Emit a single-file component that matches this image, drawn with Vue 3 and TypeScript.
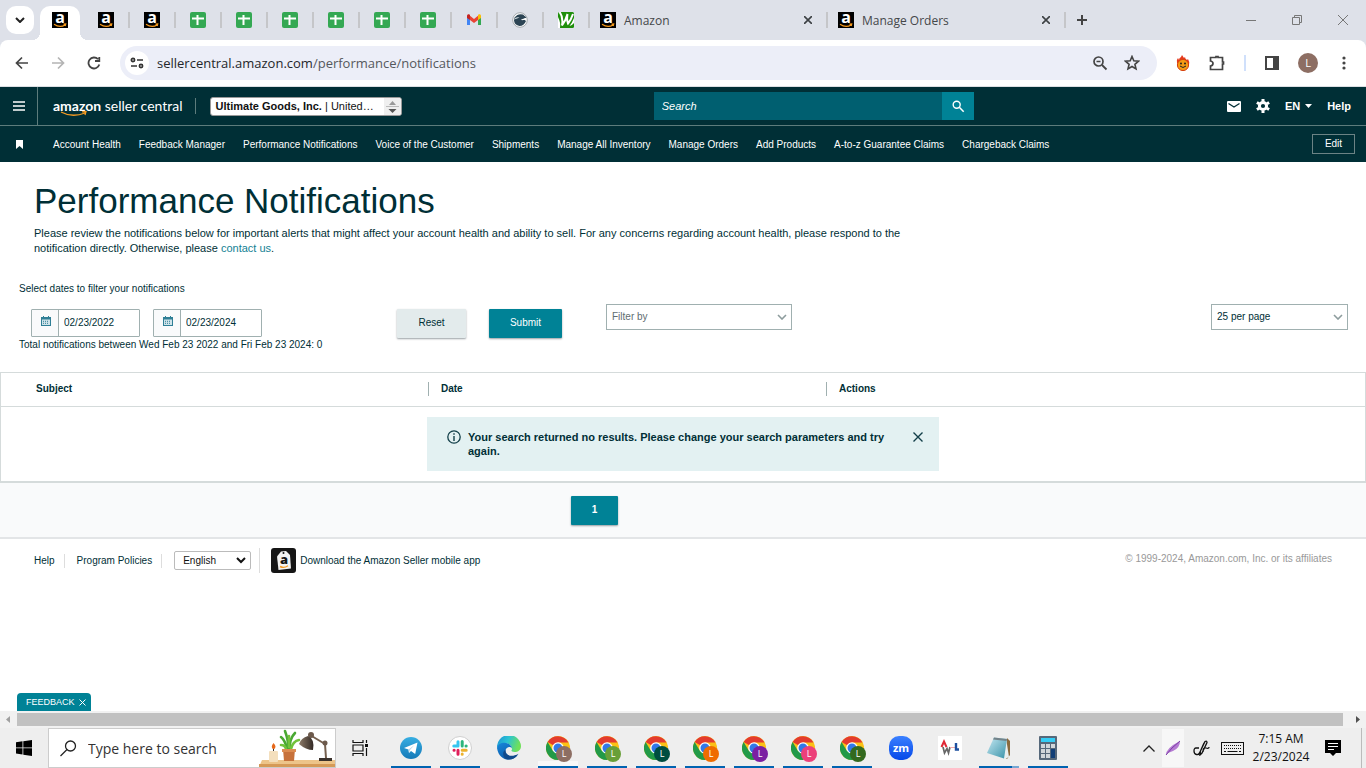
<script setup lang="ts">
import { ref } from 'vue'

interface Tab { icon: string; label: string }
interface TaskApp { name: string; icon: string; badge?: string; state: string }

const compactTabs: Tab[] = [
  { icon: 'amazon', label: 'Amazon' },
  { icon: 'amazon', label: 'Amazon' },
  ...Array.from({ length: 6 }, () => ({ icon: 'sheets', label: 'Google Sheets' })),
  { icon: 'gmail', label: 'Gmail' },
  { icon: 'bird', label: 'Bird' },
  { icon: 'leaf', label: 'Web tool' },
]
const wideTabs: Tab[] = [
  { icon: 'amazon', label: 'Amazon' },
  { icon: 'amazon', label: 'Manage Orders' },
]
const navLinks: string[] = [
  'Account Health', 'Feedback Manager', 'Performance Notifications', 'Voice of the Customer', 'Shipments',
  'Manage All Inventory', 'Manage Orders', 'Add Products', 'A-to-z Guarantee Claims', 'Chargeback Claims',
]
const apps: TaskApp[] = [
  { name: 'Telegram', icon: 'telegram', state: 'open' },
  { name: 'Slack', icon: 'slack', state: 'open' },
  { name: 'Edge', icon: 'edge', state: '' },
  { name: 'Chrome', icon: 'chrome', badge: '#8d6e63', state: 'open active' },
  { name: 'Chrome', icon: 'chrome', badge: '#689f38', state: 'open' },
  { name: 'Chrome', icon: 'chrome', badge: '#004d40', state: 'open' },
  { name: 'Chrome', icon: 'chrome', badge: '#ef6c00', state: 'open' },
  { name: 'Chrome', icon: 'chrome', badge: '#7b1fa2', state: 'open' },
  { name: 'Chrome', icon: 'chrome', badge: '#ec407a', state: 'open' },
  { name: 'Chrome', icon: 'chrome', badge: '#33691e', state: 'open' },
  { name: 'Zoom', icon: 'zoom', state: '' },
  { name: 'Monitor', icon: 'pulse', state: '' },
  { name: 'Notepad', icon: 'notepad', state: 'open stacked' },
  { name: 'Calculator', icon: 'calc', state: 'open' },
]

const startDate = ref('02/23/2022')
const endDate = ref('02/23/2024')
const searchText = ref('')
const alertOpen = ref(true)
</script>

<template>
  <div class="screen">
    <svg class="defs" width="0" height="0" aria-hidden="true">
      <defs>
        <linearGradient id="tg" x1="0" y1="0" x2="0" y2="1"><stop offset="0" stop-color="#37aee2" /><stop offset="1" stop-color="#1579b8" /></linearGradient>
        <linearGradient id="edgeTop" x1="0" y1="0" x2="1" y2="0.3"><stop offset="0" stop-color="#1b8fd6" /><stop offset="0.5" stop-color="#2bc3d2" /><stop offset="1" stop-color="#6fe05a" /></linearGradient>
        <linearGradient id="edgeBody" x1="0" y1="0" x2="0.6" y2="1"><stop offset="0" stop-color="#1788dc" /><stop offset="1" stop-color="#0c57a5" /></linearGradient>
        <linearGradient id="zm" x1="0" y1="0" x2="0" y2="1"><stop offset="0" stop-color="#3a80ff" /><stop offset="1" stop-color="#0548e8" /></linearGradient>
        <linearGradient id="note" x1="0" y1="0" x2="1" y2="1"><stop offset="0" stop-color="#c6e9f3" /><stop offset="1" stop-color="#3992a8" /></linearGradient>
        <linearGradient id="shade" x1="0" y1="0" x2="1" y2="0"><stop offset="0" stop-color="#8d7a68" /><stop offset="1" stop-color="#332a25" /></linearGradient>
        <symbol id="i-amazon" viewBox="0 0 16 16">
          <rect width="16" height="16" fill="#000" />
          <text x="8" y="11" text-anchor="middle" font-family="Open Sans, sans-serif" font-size="16" font-weight="700" fill="#fff">a</text>
          <path d="M2 12.300q6 4 11 .6M11.500 12.200l2.200-.2-.5 2" fill="none" stroke="#f79a1c" stroke-width="1.200" />
        </symbol>
        <symbol id="i-sheets" viewBox="0 0 16 16">
          <rect width="16" height="16" rx="2" fill="#34a853" />
          <path d="M2 6.500h12M7.500 3v10" stroke="#fff" stroke-width="2" />
        </symbol>
        <symbol id="i-gmail" viewBox="0 0 16 16">
          <path d="M1 4.500V13h3V7.500z" fill="#4285f4" />
          <path d="M15 4.500V13h-3V7.500z" fill="#34a853" />
          <path d="M4 8V3.800L8 7l4-3.200V8l-4 3z" fill="#ea4335" />
          <path d="M1 5V4c0-1.700 1.800-2.200 3-1.200V8L1 6z" fill="#c5221f" />
          <path d="M15 5V4c0-1.700-1.800-2.200-3-1.200V8l3-2z" fill="#fbbc04" />
        </symbol>
        <symbol id="i-bird" viewBox="0 0 16 16">
          <circle cx="8" cy="8" r="7.300" fill="#fff" stroke="#a3a9ad" />
          <path d="M2.500 5.500Q6 1 11 2.500l3.500 3-3 1.500 2.500 2Q12 14 7.500 14 2.500 13 2 8.500z" fill="#2c4454" />
          <path d="M2 7.500Q4 4.500 7.500 5.500L5 6.500z" fill="#dce4e8" />
          <path d="m9 7.500 5-1.500v1.500l-4 .8z" fill="#fff" />
        </symbol>
        <symbol id="i-leaf" viewBox="0 0 16 16">
          <rect width="16" height="16" rx="1.500" fill="#1f8f0b" />
          <path d="M1.500 0Q5.500 5 4 13.500 7.500 9 9.500 2q-1 6 .5 9.500Q13 8 15 2" fill="none" stroke="#fff" stroke-width="2" />
          <path d="M0 5q3 6 2 11H0zM16 6q-2 5-4.500 8 2 0 4.500-3z" fill="#fff" />
        </symbol>
        <symbol id="i-chrome" viewBox="0 0 24 24">
          <circle cx="12" cy="12" r="12" fill="#fbc116" />
          <path d="M12 12 1.600 6A12 12 0 0 1 22.400 6.500H12z" fill="#e33b2e" />
          <path d="M1.600 6A12 12 0 0 0 12 24l5-9-5-3-5 3z" fill="#229a48" />
          <circle cx="12" cy="12" r="5.800" fill="#fff" />
          <circle cx="12" cy="12" r="4.500" fill="#3278e8" />
        </symbol>
        <symbol id="i-telegram" viewBox="0 0 24 24">
          <circle cx="12" cy="12" r="11" fill="url(#tg)" />
          <path d="M5 12 18.500 6.500 16.200 18l-4.200-3-2 2-.5-3.600z" fill="#fff" />
          <path d="M9.500 13.400 15.500 9l-4.500 5-1 3z" fill="#bcd9ea" />
        </symbol>
        <symbol id="i-slack" viewBox="0 0 24 24">
          <circle cx="12" cy="12" r="11.500" fill="#fff" stroke="#cfcfcf" />
          <g fill="none" stroke-width="3" stroke-linecap="round">
            <path d="M10 5.800v4M5.800 10H10" stroke="#36c5f0" />
            <path d="M14.200 5.500V10M18 10h.2" stroke="#2eb67d" />
            <path d="M14.200 14.200h4M14.200 18v.2" stroke="#ecb22e" />
            <path d="M10 14.200v4M6 14.200h.2" stroke="#e01e5a" />
          </g>
        </symbol>
        <symbol id="i-edge" viewBox="0 0 24 24">
          <path d="M0 12A12 12 0 0 1 24 10c0 4-3 6-6.500 6-3 0-3.800-1.200-2.500-2.600C15 9 11 6.500 7 7.500 3 8 1 10 0 12z" fill="url(#edgeTop)" />
          <path d="M0 12c1-5 7-6.500 11-4.500 2 1 3.500 2.500 4 4.500-2-2-6-1-6.500 2.500C8 19 13 22 20.500 19 16 26 2 26 0 12z" fill="url(#edgeBody)" />
          <path d="M8.500 14C8 19 14 22 21.500 17.800 18 24 10 25.500 7 21 5.500 18 6 15 8.500 14z" fill="#114a8b" />
        </symbol>
        <symbol id="i-zoom" viewBox="0 0 24 24">
          <rect width="24" height="24" rx="10" fill="url(#zm)" />
          <text x="12" y="16" text-anchor="middle" font-family="Open Sans, sans-serif" font-size="11" font-weight="700" fill="#fff">zm</text>
        </symbol>
        <symbol id="i-pulse" viewBox="0 0 24 24">
          <rect width="24" height="24" fill="#fff" />
          <path d="M3.500 11 6 5.500 8.500 11" fill="none" stroke="#e02836" stroke-width="2" />
          <path d="M5 11l1.500 6L9 12.500l1.500 4.500 1.500-6" fill="none" stroke="#666" stroke-width="1.700" />
          <path d="M12 11.500h5" stroke="#f1a9a9" />
          <path d="M18 7v6.500h3" fill="none" stroke="#1d4f9f" stroke-width="2.400" />
        </symbol>
        <symbol id="i-notepad" viewBox="0 0 24 24">
          <path d="m20 2 3 3v14l-3 4-3-2z" fill="#8a6a3d" />
          <path d="m19 2 3 19-4 2-6-1z" fill="#e9eff0" />
          <path d="M7 1.500 20 3l-3 19.500L0 17z" fill="url(#note)" />
          <path d="M7 1.500 20 3l-.5 2-13.500-1.500z" fill="#73838a" />
        </symbol>
        <symbol id="i-calc" viewBox="0 0 24 24">
          <rect x="3" width="18" height="24" rx="1" fill="#56687a" />
          <rect x="5" y="2" width="14" height="4" fill="#35cdf5" />
          <path d="M5 8h4v4H5zM10 8h4v4h-4zM15 8h4v4h-4zM5 13h4v4H5zM10 13h4v4h-4zM5 18h4v4H5zM10 18h4v4h-4z" fill="#d0d6da" />
          <path d="M15 13h4v9h-4z" fill="#123f77" />
        </symbol>
        <symbol id="i-calendar" viewBox="0 0 10 10">
          <path d="M2 0h1v1h4V0h1v1h2v9H0V1h2z" fill="#2f7f96" />
          <path d="M1 3.500h8V9H1z" fill="#cfe3e9" />
          <path d="M2 5.300h6M2 7.300h6" stroke="#2f7f96" stroke-dasharray="1 1" />
        </symbol>
        <symbol id="i-search" viewBox="0 0 16 16">
          <circle cx="6.500" cy="6.500" r="4" fill="none" stroke="currentColor" stroke-width="1.600" />
          <path d="m9.500 9.500 5 5" stroke="currentColor" stroke-width="1.800" />
        </symbol>
      </defs>
    </svg>

    <header class="browser">
      <div class="tabstrip">
        <button class="tab-search" aria-label="Search tabs"><svg width="10" height="6"><path d="m1 1 4 4 4-4" fill="none" stroke="#222" stroke-width="2" /></svg></button>
        <div class="tab-active"><svg class="fav" role="img" aria-label="Performance Notifications"><use href="#i-amazon" /></svg></div>
        <div v-for="(tab, i) in compactTabs" :key="i" class="tab" :class="{ first: i === 0 }">
          <svg class="fav" role="img" :aria-label="tab.label"><use :href="'#i-' + tab.icon" /></svg>
        </div>
        <div v-for="tab in wideTabs" :key="tab.label" class="tab wide">
          <svg class="fav" aria-hidden="true"><use :href="'#i-' + tab.icon" /></svg>
          <span>{{ tab.label }}</span>
          <button :aria-label="'Close ' + tab.label"><svg width="8" height="8"><path d="m0 0 8 8M8 0 0 8" stroke="#3c4043" stroke-width="1.600" /></svg></button>
        </div>
        <button class="new-tab" aria-label="New tab"><svg width="10" height="10"><path d="M5 0v10M0 5h10" stroke="#444" stroke-width="2" /></svg></button>
        <div class="window-controls">
          <button aria-label="Minimize"><svg width="10" height="10"><path d="M0 5.500h10" stroke="#777" /></svg></button>
          <button aria-label="Restore"><svg width="10" height="10" fill="none" stroke="#777"><path d="M.5 2.500h7v7h-7zM2.500 2.500v-2h7v7h-2" /></svg></button>
          <button aria-label="Close window"><svg width="10" height="10"><path d="m0 0 10 10M10 0 0 10" stroke="#777" /></svg></button>
        </div>
      </div>
      <div class="toolbar">
        <button class="tool" aria-label="Back"><svg width="14" height="14" fill="none" stroke="#444" stroke-width="1.700"><path d="M13 7H2M7 1.500 1.500 7 7 12.500" /></svg></button>
        <button class="tool" aria-label="Forward"><svg width="14" height="14" fill="none" stroke="#b4b4b4" stroke-width="1.700"><path d="M1 7h11M7 1.500 12.500 7 7 12.500" /></svg></button>
        <button class="tool" aria-label="Reload"><svg width="14" height="14" fill="none" stroke="#444" stroke-width="1.800"><path d="M12.300 8.500A5.500 5.500 0 1 1 11 3.200M12.300 1V5H8" /></svg></button>
        <div class="omnibox">
          <button class="site-info" aria-label="Site information"><svg width="14" height="12" fill="none" stroke="#333" stroke-width="1.700"><circle cx="3" cy="3" r="1.600" /><path d="M7 3h6M1 9h6" /><circle cx="11" cy="9" r="1.600" /></svg></button>
          <span class="url">sellercentral.amazon.com<span>/performance/notifications</span></span>
          <button aria-label="Zoom"><svg width="16" height="16" fill="none" stroke="#444"><circle cx="6.500" cy="6.500" r="4.500" stroke-width="1.700" /><path d="m10 10 4.500 4.500" stroke-width="1.800" /><path d="M4.500 6.500h4" stroke-width="1.500" /></svg></button>
          <button aria-label="Bookmark"><svg width="16" height="16" viewBox="0 0 16 16"><path d="m8 1.500 1.800 4.300 4.700.4-3.600 3.100 1.100 4.600L8 11.500l-4 2.400 1.100-4.600L1.500 6.200l4.700-.4z" fill="none" stroke="#444" stroke-width="1.600" /></svg></button>
        </div>
        <div class="extensions">
          <button aria-label="Flame extension"><svg width="14" height="16"><path d="M1 8Q0 5 2 3l1 2q0-2 2-3l1-2 2 3 1-1q0 2 2 3l1-1q2 3 1 6z" fill="#e5391b" /><circle cx="7" cy="10" r="5.600" fill="#f49a13" stroke="#d6410e" /><circle cx="5" cy="8.500" r="1" fill="#222" /><circle cx="9" cy="8.500" r="1" fill="#222" /><path d="M4 11q3 3 6 0" fill="none" stroke="#222" /></svg></button>
          <button aria-label="Extensions"><svg width="18" height="18" viewBox="0 0 18 18"><path d="M2.500 3.500H8v-1h2v1h4.500V8h1v2h-1v5.500h-12V12Q5 11.500 5 9.500T2.500 7z" fill="none" stroke="#444" stroke-width="1.700" /></svg></button>
          <i class="split"></i>
          <button aria-label="Side panel"><svg width="16" height="14"><path d="M2 1h12v12H2z" fill="none" stroke="#444" stroke-width="2" /><path d="M9 1h5v12H9z" fill="#444" /></svg></button>
          <button class="profile" aria-label="Profile">L</button>
          <button class="more" aria-label="Menu"><svg width="4" height="14" fill="#444"><circle cx="2" cy="2" r="1.600" /><circle cx="2" cy="7" r="1.600" /><circle cx="2" cy="12" r="1.600" /></svg></button>
        </div>
      </div>
    </header>

    <div class="topbar">
      <div class="brand-side">
        <button class="hamburger" aria-label="Open menu"><svg width="12" height="10"><path d="M0 1h12M0 5h12M0 9h12" stroke="#fff" stroke-width="1.400" /></svg></button>
        <a href="#" class="logo"><b>amazon</b> seller central
          <svg width="28" height="6" aria-hidden="true"><path d="M1 1q11 6 24 1M22 .8l4-.3-1 3.500" fill="none" stroke="#f59b23" stroke-width="1.300" /></svg>
        </a>
        <button class="store"><span><b>Ultimate Goods, Inc.</b> | United…</span><svg width="17" height="17"><path d="M0 0h17v17H0z" fill="#efefef" /><path d="m8.500 3 3.500 4H5z" fill="#999" /><path d="M2 8.500h13" stroke="#bbb" /><path d="m8.500 15 4-4h-8z" fill="#555" /></svg></button>
      </div>
      <form class="search" @submit.prevent>
        <input v-model="searchText" type="text" aria-label="Search" placeholder="Search" />
        <button aria-label="Submit search"><svg width="14" height="14"><use href="#i-search" /></svg></button>
      </form>
      <div class="account-side">
        <button aria-label="Messages"><svg width="14" height="11"><rect width="14" height="11" rx="1" fill="#fff" /><path d="m1.500 2.500 5.500 3.500 5.500-3.500" fill="none" stroke="#002f36" stroke-width="1.300" /></svg></button>
        <button aria-label="Settings"><svg width="14" height="14" viewBox="0 0 14 14"><circle cx="7" cy="7" r="3.600" fill="none" stroke="#fff" stroke-width="3" /><path d="M7 0v2.500M7 11.500V14M.9 3.500l2.200 1.300M10.900 9.200l2.200 1.300M.9 10.500l2.200-1.300M10.900 4.800l2.200-1.300" stroke="#fff" stroke-width="3" /></svg></button>
        <button class="lang">EN <svg width="7" height="4"><path d="M0 0h7L3.500 4z" fill="#fff" /></svg></button>
        <a href="#">Help</a>
      </div>
    </div>

    <nav class="favorites">
      <button class="bookmark" aria-label="Favorites"><svg width="7" height="9"><path d="M0 0h7v9L3.500 6 0 9z" fill="#fff" /></svg></button>
      <div class="links"><a v-for="link in navLinks" :key="link" href="#">{{ link }}</a></div>
      <button class="edit">Edit</button>
    </nav>

    <main class="content">
      <section class="intro">
        <h1>Performance Notifications</h1>
        <p>Please review the notifications below for important alerts that might affect your account health and ability to sell. For any concerns regarding account health, please respond to the notification directly. Otherwise, please <a href="#">contact us</a>.</p>
      </section>

      <section class="filters">
        <p class="hint">Select dates to filter your notifications</p>
        <div class="filter-row">
          <div class="dates">
            <label class="date"><span><svg width="10" height="10"><use href="#i-calendar" /></svg></span><input v-model="startDate" type="text" aria-label="Start date" /></label>
            <label class="date"><span><svg width="10" height="10"><use href="#i-calendar" /></svg></span><input v-model="endDate" type="text" aria-label="End date" /></label>
          </div>
          <button class="btn reset">Reset</button>
          <button class="btn primary submit">Submit</button>
          <div class="picker filter-by">
            <select aria-label="Filter by"><option>Filter by</option></select>
            <svg width="10" height="6" aria-hidden="true"><path d="m1 1 4 4 4-4" fill="none" stroke="#8d9c9d" stroke-width="1.600" /></svg>
          </div>
          <div class="picker per-page">
            <select aria-label="Results per page"><option>25 per page</option></select>
            <svg width="10" height="6" aria-hidden="true"><path d="m1 1 4 4 4-4" fill="none" stroke="#8d9c9d" stroke-width="1.600" /></svg>
          </div>
        </div>
        <p class="total">Total notifications between Wed Feb 23 2022 and Fri Feb 23 2024: 0</p>
      </section>

      <table class="results">
        <thead>
          <tr><th scope="col">Subject</th><th scope="col"><span>Date</span></th><th scope="col"><span>Actions</span></th></tr>
        </thead>
        <tbody>
          <tr>
            <td colspan="3">
              <div v-if="alertOpen" class="alert" role="status">
                <svg width="14" height="14" aria-hidden="true"><circle cx="7" cy="7" r="6.200" fill="none" stroke="#123f49" stroke-width="1.300" /><path d="M7 6v5M7 3.300v1.500" stroke="#123f49" stroke-width="1.400" /></svg>
                <span>Your search returned no results. Please change your search parameters and try again.</span>
                <button aria-label="Dismiss" @click="alertOpen = false"><svg width="10" height="10"><path d="m.5.5 9 9M9.500.5l-9 9" stroke="#123f49" stroke-width="1.400" /></svg></button>
              </div>
            </td>
          </tr>
        </tbody>
      </table>

      <div class="pager"><button class="btn primary page">1</button></div>

      <footer class="footer">
        <a href="#">Help</a>
        <a href="#">Program Policies</a>
        <div class="lang-pick"><select aria-label="Language"><option>English</option></select><svg width="10" height="7" aria-hidden="true"><path d="m1 1 4 4 4-4" fill="none" stroke="#111" stroke-width="2" /></svg></div>
        <a href="#" class="app">
          <svg width="25" height="25" viewBox="0 0 25 25"><rect width="25" height="25" rx="3" fill="#151515" /><path d="M6 8.500 10 3.500l5-.5 4 4 1 13.500-12.500 1.500z" fill="#f2f2f2" /><circle cx="12.500" cy="5" r="1" fill="#151515" /><text x="13" y="16" text-anchor="middle" font-family="Open Sans, sans-serif" font-weight="800" font-size="13" fill="#151515">a</text><path d="M9 18.500q4 2 8-.8" fill="none" stroke="#f59b23" stroke-width="1.400" /></svg>
          Download the Amazon Seller mobile app
        </a>
        <small>© 1999-2024, Amazon.com, Inc. or its affiliates</small>
      </footer>

      <div class="feedback"><button>FEEDBACK</button><button aria-label="Close feedback"><svg width="7" height="7"><path d="m.5.5 6 6M6.500.5l-6 6" stroke="#fff" /></svg></button></div>
    </main>

    <div class="scrollbar" aria-hidden="true">
      <svg width="17" height="17"><path d="M6 8.500 10 5v7z" fill="#a0a0a0" /></svg>
      <i></i>
      <svg width="23" height="17"><path d="M17 8.500 13 5v7z" fill="#505050" /></svg>
    </div>

    <footer class="taskbar">
      <button class="start" aria-label="Start"><svg width="16" height="16" fill="#000"><path d="M0 2.200 6.500 1.300v6.200H0zM7.300 1.200 16 0v7.500H7.300zM0 8.300h6.500v6.200L0 13.600zM7.300 8.300H16V16l-8.700-1.200z" /></svg></button>
      <label class="win-search">
        <svg width="17" height="17" fill="none" stroke="#222" stroke-width="1.300" aria-hidden="true"><circle cx="10.500" cy="6" r="5" /><path d="m7 9.500-6.500 6.500" /></svg>
        <input type="text" aria-label="Windows search" placeholder="Type here to search" />
        <svg class="scene" width="76" height="38" viewBox="0 0 76 38" aria-hidden="true">
          <path d="M3 31h73v7H0z" fill="#edc489" /><path d="M0 35h76v3H0z" fill="#d59a57" />
          <rect x="10" y="22" width="9" height="11" rx="1" fill="#f4dfbd" /><path d="M14.500 14q4 4 0 6.500-3.500-2.500 0-6.500z" fill="#e6691c" /><path d="M14.500 20v2" stroke="#333" />
          <g fill="none" stroke-width="2.600" stroke-linecap="round"><path d="M30 21Q29 10 26 2M31 20Q30 10 36 4M28 20Q26 11 22 8" stroke="#49a832" /><path d="M32 20Q34 12 40 11M27 20Q26 16 22 16M30 18V7" stroke="#72c23b" /></g>
          <path d="M24 20h12l-1 12H25z" fill="#c7713b" /><path d="M23 20h14v3H23z" fill="#dc8b50" />
          <path d="M51 6 66 15l1 14" fill="none" stroke="#75604f" stroke-width="2" /><circle cx="52" cy="6" r="3" fill="#6c594b" /><circle cx="66" cy="14" r="2.500" fill="#6c594b" />
          <path d="M49 7q7 3 5 14-7 0-14-6 2-6 9-8z" fill="url(#shade)" /><path d="M60 29h13v3H60z" fill="#3b322c" />
        </svg>
      </label>
      <button class="task-view" aria-label="Task view"><svg width="17" height="16" fill="none" stroke="#111" stroke-width="1.200"><path d="M1 0v2.500h10V0M1 16v-2.500h10V16M1 5h10v6H1zM14.500 0v3M14.500 8v8" /><path d="M13 5.500h3" stroke-width="3" /></svg></button>
      <div class="apps">
        <button v-for="(app, i) in apps" :key="i" class="app-icon" :class="app.state" :aria-label="app.name">
          <svg width="24" height="24"><use :href="'#i-' + app.icon" /></svg>
          <span v-if="app.badge" class="badge" :style="{ background: app.badge }">L</span>
        </button>
      </div>
      <div class="tray">
        <button class="chev" aria-label="Show hidden icons"><svg width="12" height="7"><path d="m.5 6.500 5.500-5.500 5.500 5.500" fill="none" stroke="#222" stroke-width="1.300" /></svg></button>
        <button class="feather" aria-label="Feather"><svg width="16" height="16"><path d="M1 15Q1 8 15 1q0 7-7 10l-5 2z" fill="#b47ad2" /><path d="M1 15Q6 8 15 1" fill="none" stroke="#7d3fa6" /></svg></button>
        <button class="pen" aria-label="Ink workspace"><svg width="17" height="16" fill="none" stroke="#111" stroke-width="1.300"><path d="M6 8H3q-2 0-2 3t2.500 3.500Q6 15 7 12L12 1.500q2-1 2 1L9 13l-2 2 .5-4L11 3M10 12q0-5 3-4t3-1" /></svg></button>
        <button class="keys" aria-label="Touch keyboard"><svg width="23" height="13" fill="none" stroke="#111"><rect x=".5" y=".5" width="22" height="12" /><path d="M3 3.500h17M3 6.500h17" stroke-dasharray="1 1" /><path d="M3 9.500h2M6.500 9.500h10M18 9.500h2" /></svg></button>
        <button class="clock"><span>7:15 AM</span><span>2/23/2024</span></button>
        <button class="notes" aria-label="Notifications"><svg width="16" height="16"><path d="M0 0h16v13h-5l-3 3-3-3H0z" /><path d="M3 3.500h10M3 6.500h10M3 9.500h6" stroke="#fff" /></svg></button>
      </div>
    </footer>
  </div>
</template>

<style>
html, body { margin: 0; }
</style>

<style scoped>
* { box-sizing: border-box; }
.screen { min-height: 100vh; display: flex; flex-direction: column; background: #fff; color: #002f36; font: 10px/14px "Liberation Sans", Arial, sans-serif; }
.defs { position: absolute; }
button { font: inherit; color: inherit; background: none; border: 0; padding: 0; display: flex; align-items: center; justify-content: center; cursor: pointer; }
input, select { font: inherit; color: inherit; border: 0; outline: 0; min-width: 0; margin: 0; }
select { appearance: none; }
a { color: inherit; text-decoration: none; }
svg { flex: none; display: block; }
h1, p { margin: 0; }

.browser { background: #dee1e9; font-family: "Open Sans", "Noto Sans", sans-serif; color: #45474a; }
.tabstrip { height: 40px; display: flex; align-items: center; padding-left: 6px; }
.tab-search { width: 28px; height: 28px; border-radius: 10px; background: #fff; margin-right: 6px; }
.tab-active { width: 40px; height: 34px; align-self: flex-end; background: #fff; border-radius: 10px 10px 0 0; padding: 6px 12px; position: relative; }
.tab-active::before, .tab-active::after { content: ""; position: absolute; bottom: 0; width: 8px; height: 8px; }
.tab-active::before { right: 100%; background: radial-gradient(circle at 0 0, transparent 8px, #fff 8px); }
.tab-active::after { left: 100%; background: radial-gradient(circle at 100% 0, transparent 8px, #fff 8px); }
.fav { width: 16px; height: 16px; }
.tab { width: 46px; height: 16px; padding-left: 14px; border-right: 2px solid #c5c6c9; display: flex; align-items: center; }
.tab.first { margin-left: 4px; }
.tab.wide { width: 238px; padding: 0 14px 0 10px; gap: 8px; font-size: 12px; line-height: 16px; }
.tab.wide span { padding-top: 1px; }
.tab.wide button { margin-left: auto; }
.new-tab { margin-left: 11px; }
.window-controls { margin-left: auto; display: flex; }
.window-controls button { width: 46px; height: 32px; }
.toolbar { height: 47px; background: #fff; border-bottom: 1px solid #dcdfe3; border-radius: 8px 8px 0 0; display: flex; align-items: center; padding: 0 20px 0 4px; }
.tool { width: 36px; height: 36px; }
.omnibox { flex: 1; height: 34px; margin-left: 8px; border-radius: 17px; background: #eceef8; display: flex; align-items: center; gap: 16px; padding: 0 17px 0 5px; }
.site-info { width: 24px; height: 24px; border-radius: 12px; background: #fff; }
.url { flex: 1; margin-left: -8px; font-size: 13px; line-height: 18px; color: #24262a; }
.url span { color: #55585d; }
.extensions { display: flex; align-items: center; gap: 18px; padding-left: 19px; }
.split { width: 2px; height: 16px; background: #d0e0fb; }
.profile { width: 20px; height: 20px; border-radius: 10px; background: #8d6e63; color: #fff; font-size: 11px; }
.more { margin-left: 6px; }

.topbar { height: 39px; background: #002f36; border-bottom: 1px solid #5d7c7c; color: #fff; display: grid; grid-template-columns: 5fr 320px 3fr; align-items: center; font-size: 11px; }
.brand-side { display: flex; align-items: center; height: 100%; min-width: 0; }
.hamburger { width: 38px; height: 38px; border-right: 1px solid #5d7c7c; }
.logo { position: relative; margin-left: 15px; font: 14px/16px Lato, sans-serif; white-space: nowrap; padding-right: 12px; border-right: 1px solid #5d7c7c; }
.logo b { font-weight: 700; }
.logo svg { position: absolute; left: 7px; top: 13px; }
.store { margin-left: 14px; width: 192px; height: 19px; background: #fff; color: #111; border: 1px solid #999; border-radius: 3px; padding-left: 5px; justify-content: space-between; overflow: hidden; white-space: nowrap; }
.search { display: flex; height: 28px; }
.search input { flex: 1; background: #005f70; color: #fff; padding: 0 8px; font-size: 11px; font-style: italic; }
.search input::placeholder { color: #fff; opacity: 1; }
.search button { width: 32px; background: #008296; }
.account-side { display: flex; align-items: center; justify-content: flex-end; gap: 15px; padding-right: 15px; }
.lang { gap: 5px; }
.lang, .account-side a { font-weight: 700; }

.favorites { min-height: 36px; background: #002f36; color: #fff; display: flex; align-items: center; padding-right: 11px; }
.bookmark { width: 38px; height: 36px; }
.links { flex: 1; display: flex; gap: 18px; margin-left: 15px; padding-top: 2px; white-space: nowrap; }
.edit { width: 43px; height: 20px; border: 1px solid #6b8385; }

.content { flex: 1; position: relative; }
.intro { padding: 18px 34px 0; }
h1 { font-size: 35px; line-height: 42px; font-weight: 400; }
.intro p { max-width: 870px; font-size: 11px; line-height: 15px; margin-top: 4px; }
.intro a { color: #137f94; }
.filters { padding: 26px 18px 0 19px; }
.filter-row { display: flex; align-items: flex-start; padding-top: 8px; height: 42px; }
.dates { display: flex; gap: 13px; padding: 5px 0 0 12px; }
.date { display: flex; width: 109px; height: 28px; border: 1px solid #a0b0b0; border-radius: 1px; }
.date span { width: 27px; border-right: 1px solid #a0b0b0; background: #f9fafb; padding: 6px 0 0 9px; }
.date input { flex: 1; padding: 0 5px; background: #fff; }
.btn { height: 29px; margin-top: 5px; padding-bottom: 2px; border-radius: 1px; box-shadow: 0 1px 2px rgba(0, 20, 30, 0.4); }
.reset { width: 69px; margin-left: 135px; background: #e3ebec; }
.primary { background: #008296; color: #fff; }
.submit { width: 73px; margin-left: 23px; }
.picker { display: flex; align-items: center; height: 26px; border: 1px solid #a0b0b0; padding-right: 4px; }
.picker select { flex: 1; height: 24px; padding: 0 5px; background: transparent; }
.filter-by { width: 186px; margin-left: 44px; color: #5f6d70; }
.per-page { width: 137px; margin-left: auto; }
.results { width: 100%; margin-top: 20px; border-collapse: separate; border-spacing: 0; border: 1px solid #d5dbdb; border-bottom-width: 2px; }
.results th { height: 34px; padding: 0 0 2px; text-align: left; font-weight: 700; border-bottom: 1px solid #d5dbdb; }
.results th:first-child { width: 427px; padding-left: 35px; }
.results th:nth-child(2) { width: 398px; }
.results th span { display: block; border-left: 1px solid #a0b0b0; padding-left: 12px; }
.results td { padding: 10px 0; }
.alert { width: 512px; min-height: 54px; margin: 0 auto; background: #e3f1f2; display: flex; align-items: flex-start; gap: 7px; padding: 13px 16px 13px 20px; font-size: 11px; line-height: 14px; font-weight: 700; }
.alert span { flex: 1; }
.alert button { padding-top: 2px; }
.pager { min-height: 56px; background: #f9fafb; border-bottom: 2px solid #e3e5e7; padding: 8px 0 0 571px; }
.page { width: 47px; font-weight: 700; }
.footer { display: flex; align-items: center; padding: 9px 34px 0; }
.footer > a:not(.app) { padding-right: 9px; border-right: 1px solid #ddd; margin-right: 12px; }
.lang-pick { width: 77px; height: 19px; border: 1px solid #bbb; border-radius: 2px; display: flex; align-items: center; padding-right: 4px; }
.lang-pick select { flex: 1; height: 17px; padding: 0 8px; background: transparent; color: #111; }
.app { display: flex; align-items: center; gap: 4px; border-left: 1px solid #ddd; margin-left: 8px; padding-left: 11px; }
.footer small { margin-left: auto; padding-bottom: 4px; color: #999; font-size: 10px; }
.feedback { position: absolute; left: 17px; bottom: 0; height: 18px; display: flex; align-items: center; gap: 4px; padding: 0 5px 0 9px; background: #008296; color: #fff; border-radius: 4px 4px 0 0; font-size: 9px; }

.scrollbar { height: 17px; background: #f1f1f1; display: flex; align-items: center; }
.scrollbar i { flex: 1; height: 13px; background: #c1c1c1; }
.taskbar { height: 40px; background: #eee; display: flex; align-items: stretch; font-family: "Open Sans", "Noto Sans", sans-serif; color: #111; }
.start { width: 48px; }
.win-search { width: 288px; background: #fff; border: 1px solid #ccc; display: flex; align-items: center; padding-left: 11px; gap: 11px; }
.win-search input { flex: 1; font-size: 14px; background: transparent; padding: 0; }
.win-search input::placeholder { color: #333; opacity: 1; }
.task-view { width: 48px; }
.apps { display: flex; gap: 9px; padding-left: 7px; }
.app-icon { position: relative; width: 40px; border-bottom: 2px solid transparent; padding-top: 2px; }
.open { border-color: #0063b1; }
.active { background: linear-gradient(#eee 33px, #f8f8f8 33px); }
.stacked { border-image: linear-gradient(90deg, #0063b1 80%, #76a7d3 80%) 1; border-width: 0 0 2px; border-style: solid; }
.badge { position: absolute; left: 18px; top: 18px; width: 16px; height: 16px; border-radius: 8px; color: #fff; font-size: 9px; line-height: 16px; }
.tray { margin-left: auto; display: flex; align-items: center; border-right: 1px solid #bbb; margin-right: 4px; padding-right: 20px; }
.chev { margin-right: 7px; }
.feather { width: 22px; height: 38px; background: #f7f7f7; }
.pen { margin-left: 9px; }
.keys { margin-left: 11px; }
.clock { flex-direction: column; width: 74px; font-size: 12px; line-height: 18px; }
.notes { margin-left: 7px; }
</style>
